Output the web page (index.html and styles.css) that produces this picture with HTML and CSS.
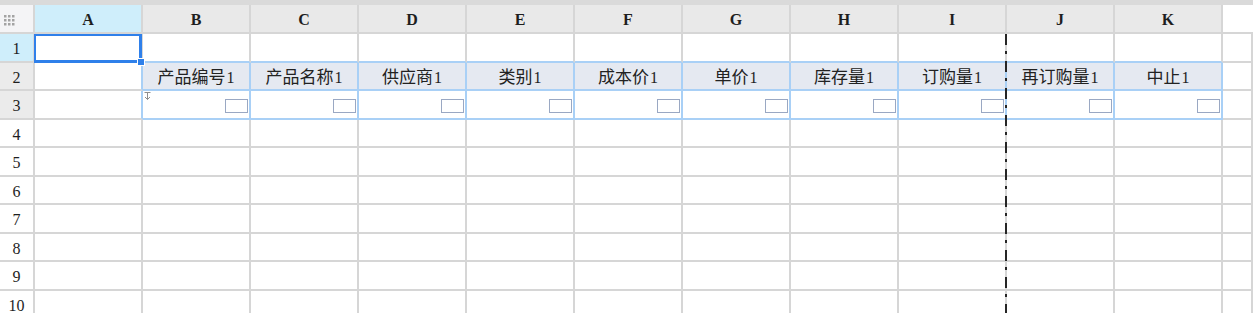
FILE: index.html
```html
<!DOCTYPE html>
<html lang="zh-CN">
<head>
<meta charset="utf-8">
<title>产品表单</title>
<link rel="stylesheet" href="styles.css">
</head>
<body>
<div class="sheet">
  <div class="grid">
    <!-- column headers -->
    <div class="c corner">
      <svg class="grip" width="11" height="11" viewBox="0 0 11 11">
        <g fill="#a3a3a3">
          <rect x="0" y="0" width="2.5" height="2.5"/><rect x="4" y="0" width="2.5" height="2.5"/><rect x="8" y="0" width="2.5" height="2.5"/>
          <rect x="0" y="4" width="2.5" height="2.5"/><rect x="4" y="4" width="2.5" height="2.5"/><rect x="8" y="4" width="2.5" height="2.5"/>
          <rect x="0" y="8" width="2.5" height="2.5"/><rect x="4" y="8" width="2.5" height="2.5"/><rect x="8" y="8" width="2.5" height="2.5"/>
        </g>
      </svg>
    </div>
    <div class="c ch active">A</div>
    <div class="c ch">B</div>
    <div class="c ch">C</div>
    <div class="c ch">D</div>
    <div class="c ch">E</div>
    <div class="c ch">F</div>
    <div class="c ch">G</div>
    <div class="c ch">H</div>
    <div class="c ch">I</div>
    <div class="c ch">J</div>
    <div class="c ch">K</div>
    <div class="c ch blank"></div>

    <!-- row 1 -->
    <div class="c rh active">1</div>
    <div class="c"></div>
    <div class="c above"></div><div class="c above"></div><div class="c above"></div><div class="c above"></div><div class="c above"></div>
    <div class="c above"></div><div class="c above"></div><div class="c above"></div><div class="c above"></div><div class="c above"></div>
    <div class="c"></div>

    <!-- row 2: field captions -->
    <div class="c rh used">2</div>
    <div class="c before"></div>
    <div class="c cap"><span>产品编号<span class="n">1</span></span></div>
    <div class="c cap"><span>产品名称<span class="n">1</span></span></div>
    <div class="c cap"><span>供应商<span class="n">1</span></span></div>
    <div class="c cap"><span>类别<span class="n">1</span></span></div>
    <div class="c cap"><span>成本价<span class="n">1</span></span></div>
    <div class="c cap"><span>单价<span class="n">1</span></span></div>
    <div class="c cap"><span>库存量<span class="n">1</span></span></div>
    <div class="c cap"><span>订购量<span class="n">1</span></span></div>
    <div class="c cap"><span>再订购量<span class="n">1</span></span></div>
    <div class="c cap"><span>中止<span class="n">1</span></span></div>
    <div class="c"></div>

    <!-- row 3: field inputs -->
    <div class="c rh used">3</div>
    <div class="c before"></div>
    <div class="c fld">
      <svg class="expand" width="7" height="8" viewBox="0 0 7 8">
        <path d="M0.5 0.5H6.5M3.5 0.5V7.5M1 5L3.5 7.5L6 5" fill="none" stroke="#8e8e8e" stroke-width="1"/>
      </svg>
      <span class="box"></span>
    </div>
    <div class="c fld"><span class="box"></span></div>
    <div class="c fld"><span class="box"></span></div>
    <div class="c fld"><span class="box"></span></div>
    <div class="c fld"><span class="box"></span></div>
    <div class="c fld"><span class="box"></span></div>
    <div class="c fld"><span class="box"></span></div>
    <div class="c fld"><span class="box"></span></div>
    <div class="c fld"><span class="box"></span></div>
    <div class="c fld"><span class="box"></span></div>
    <div class="c"></div>

    <!-- rows 4-10 -->
    <div class="c rh">4</div>
    <div class="c"></div><div class="c"></div><div class="c"></div><div class="c"></div><div class="c"></div><div class="c"></div>
    <div class="c"></div><div class="c"></div><div class="c"></div><div class="c"></div><div class="c"></div><div class="c"></div>

    <div class="c rh">5</div>
    <div class="c"></div><div class="c"></div><div class="c"></div><div class="c"></div><div class="c"></div><div class="c"></div>
    <div class="c"></div><div class="c"></div><div class="c"></div><div class="c"></div><div class="c"></div><div class="c"></div>

    <div class="c rh">6</div>
    <div class="c"></div><div class="c"></div><div class="c"></div><div class="c"></div><div class="c"></div><div class="c"></div>
    <div class="c"></div><div class="c"></div><div class="c"></div><div class="c"></div><div class="c"></div><div class="c"></div>

    <div class="c rh">7</div>
    <div class="c"></div><div class="c"></div><div class="c"></div><div class="c"></div><div class="c"></div><div class="c"></div>
    <div class="c"></div><div class="c"></div><div class="c"></div><div class="c"></div><div class="c"></div><div class="c"></div>

    <div class="c rh">8</div>
    <div class="c"></div><div class="c"></div><div class="c"></div><div class="c"></div><div class="c"></div><div class="c"></div>
    <div class="c"></div><div class="c"></div><div class="c"></div><div class="c"></div><div class="c"></div><div class="c"></div>

    <div class="c rh">9</div>
    <div class="c"></div><div class="c"></div><div class="c"></div><div class="c"></div><div class="c"></div><div class="c"></div>
    <div class="c"></div><div class="c"></div><div class="c"></div><div class="c"></div><div class="c"></div><div class="c"></div>

    <div class="c rh">10</div>
    <div class="c"></div><div class="c"></div><div class="c"></div><div class="c"></div><div class="c"></div><div class="c"></div>
    <div class="c"></div><div class="c"></div><div class="c"></div><div class="c"></div><div class="c"></div><div class="c"></div>
  </div>

  <!-- active cell A1 with fill handle -->
  <div class="selection"><span class="handle"></span></div>
  <!-- page break between columns I and J -->
  <div class="page-break"></div>
</div>
</body>
</html>
```

FILE: styles.css
```css
* {
  box-sizing: border-box;
  margin: 0;
  padding: 0;
}

html,
body {
  width: 1253px;
  height: 313px;
  overflow: hidden;
  background: #ffffff;
}

body {
  font-family: "Noto Sans CJK SC", "Noto Sans", sans-serif;
  color: #222222;
}

.sheet {
  position: relative;
  border-top: 5px solid #dadada;
}

.grid {
  display: grid;
  grid-template-columns: 35px repeat(11, 108px) 30px;
  grid-template-rows: 29px repeat(10, 28.5px);
}

.c {
  border-right: 2px solid #d6d6d6;
  border-bottom: 2px solid #d6d6d6;
  min-width: 0;
  overflow: hidden;
}

/* headers */
.corner {
  background: #f4f4f6;
  display: flex;
  align-items: center;
  padding: 4px 0 0 4px;
}

.ch,
.rh {
  display: flex;
  align-items: center;
  justify-content: center;
  font-family: "Liberation Serif", "DejaVu Serif", serif;
  color: #1e1e1e;
}

.ch {
  background: #e9e9e9;
  font-size: 16px;
  font-weight: bold;
  padding-top: 3px;
}

.ch.blank {
  background: #ffffff;
  border-right: none;
}

.rh {
  background: #ffffff;
  font-size: 16px;
  padding-top: 4px;
}

.rh.used {
  background: #ebebeb;
}

.ch.active,
.rh.active {
  background: #cfeefb;
}

/* field region B2:K3 */
.above {
  border-bottom-color: #a9d0f6;
}

.before {
  border-right-color: #a9d0f6;
}

.cap,
.fld {
  border-right-color: #a9d0f6;
  border-bottom-color: #a9d0f6;
}

.cap {
  background: #e5e9f1;
  display: flex;
  align-items: center;
  justify-content: center;
  font-size: 17px;
  line-height: 1;
  padding-top: 1px;
  white-space: nowrap;
}

.cap .n {
  font-family: "Liberation Serif", serif;
  font-size: 16px;
  margin-left: 1px;
}

.fld {
  position: relative;
  display: flex;
  align-items: flex-end;
  justify-content: flex-end;
  padding: 0 1px 5px 0;
}

.box {
  width: 23px;
  height: 14px;
  border: 1.5px solid #9aa8c3;
  background: #ffffff;
}

.expand {
  position: absolute;
  left: 1px;
  top: 1px;
}

/* active cell */
.selection {
  position: absolute;
  left: 34px;
  top: 29px;
  width: 108px;
  height: 29px;
  border: 2px solid #2f80ea;
  border-right-width: 3px;
  border-bottom-width: 3px;
}

.handle {
  position: absolute;
  right: -6px;
  bottom: -6px;
  width: 8px;
  height: 8px;
  background: #2f80ea;
  border: 1px solid #ffffff;
}

/* dash-dot page break */
.page-break {
  position: absolute;
  left: 1005px;
  top: 29px;
  bottom: 0;
  width: 2px;
  background: repeating-linear-gradient(
    to bottom,
    #262626 0,
    #262626 11px,
    transparent 11px,
    transparent 17px,
    #262626 17px,
    #262626 20px,
    transparent 20px,
    transparent 27px
  );
}
```
